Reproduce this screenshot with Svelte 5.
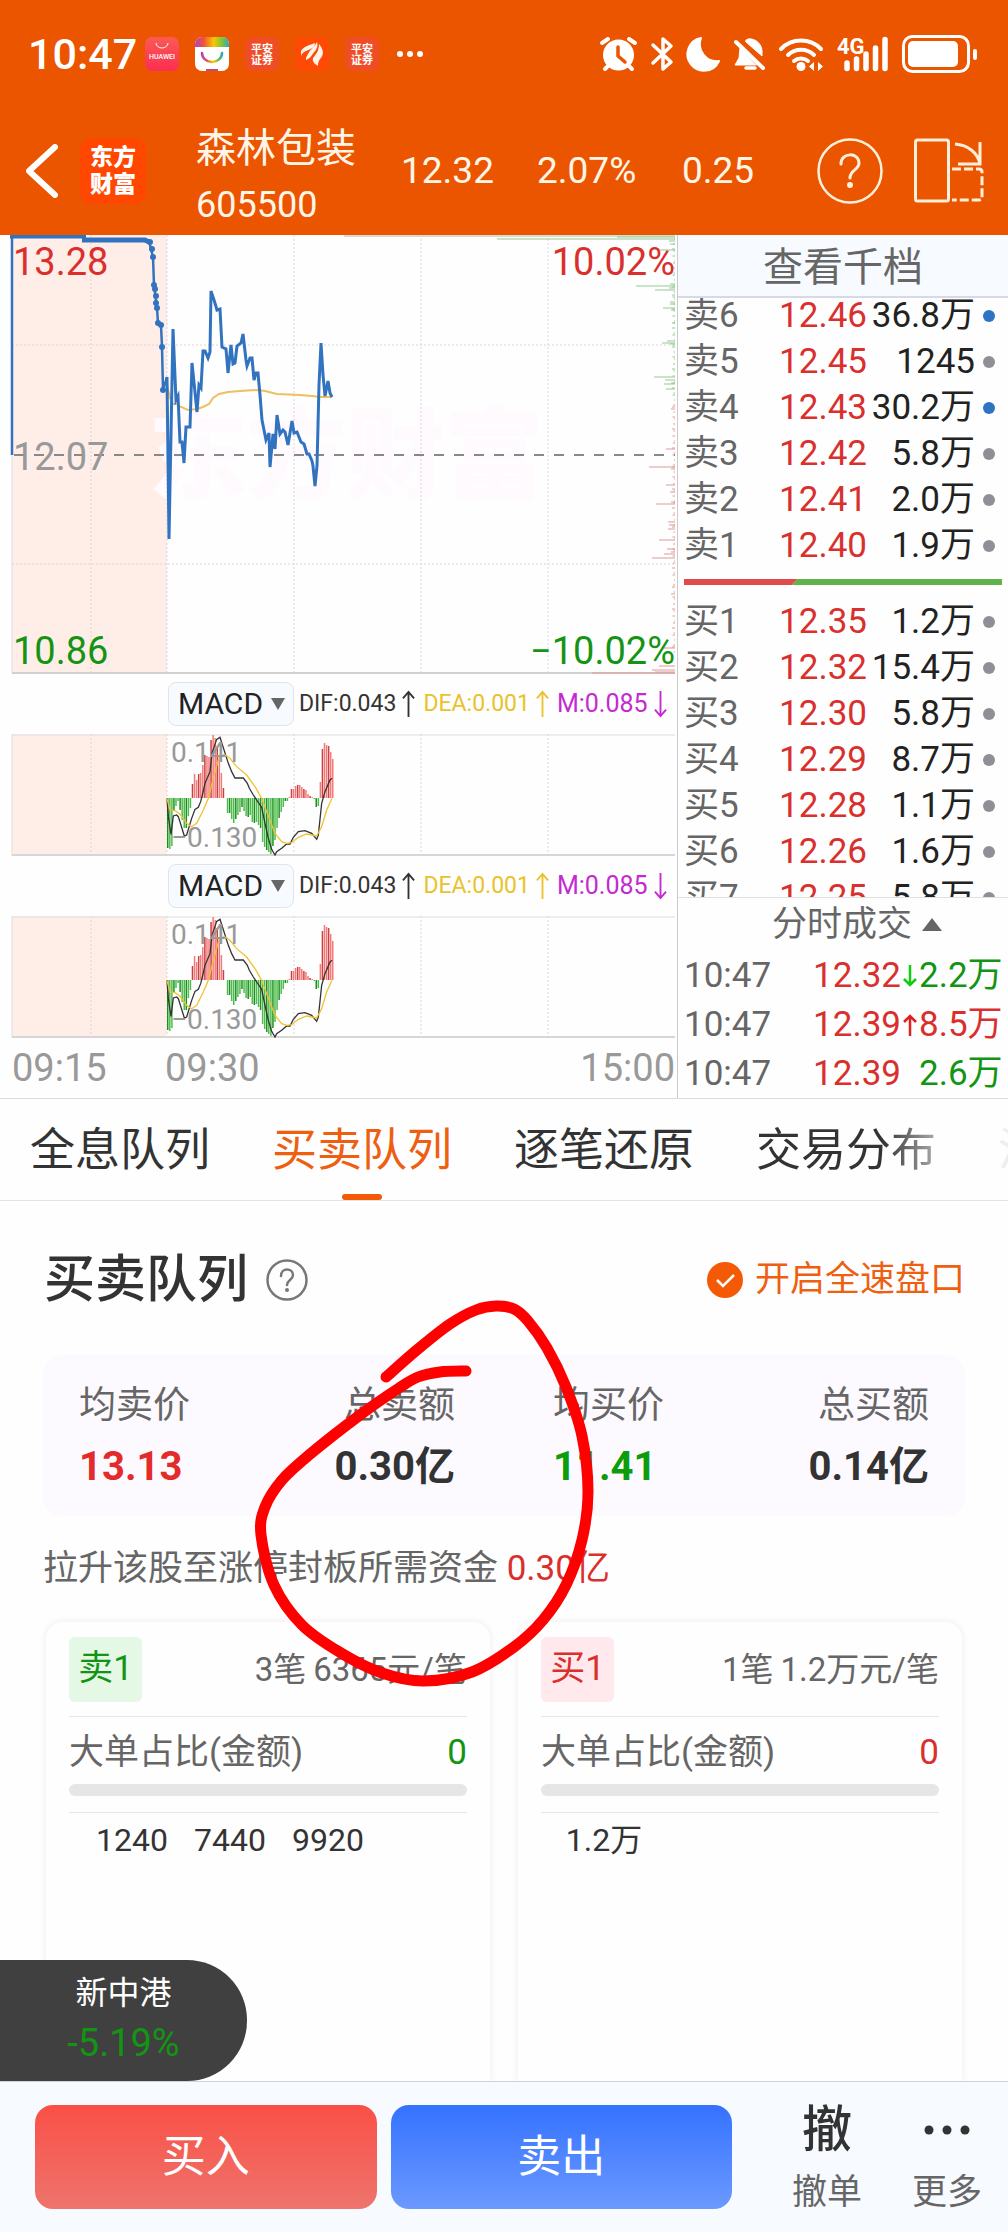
<script>
  const sells = [
    ['卖6', '12.46', '36.8万', true],
    ['卖5', '12.45', '1245', false],
    ['卖4', '12.43', '30.2万', true],
    ['卖3', '12.42', '5.8万', false],
    ['卖2', '12.41', '2.0万', false],
    ['卖1', '12.40', '1.9万', false]
  ];
  const buys = [
    ['买1', '12.35', '1.2万', false],
    ['买2', '12.32', '15.4万', false],
    ['买3', '12.30', '5.8万', false],
    ['买4', '12.29', '8.7万', false],
    ['买5', '12.28', '1.1万', false],
    ['买6', '12.26', '1.6万', false],
    ['买7', '12.25', '5.8万', false]
  ];
  const ticks = [
    { time: '10:47', price: '12.32', dir: 'down', amount: '2.2万', tone: 'green' },
    { time: '10:47', price: '12.39', dir: 'up', amount: '8.5万', tone: 'red' },
    { time: '10:47', price: '12.39', dir: '', amount: '2.6万', tone: 'green' }
  ];
  const tabs = ['全息队列', '买卖队列', '逐笔还原', '交易分布', '沪深港通'];
  let active = $state(1);

  const cards = [
    { tag: '卖1', tone: 'green', count: '3笔', avg: '6365元/笔', big: '0', items: ['1240', '7440', '9920'] },
    { tag: '买1', tone: 'red', count: '1笔', avg: '1.2万元/笔', big: '0', items: ['1.2万'] }
  ];

  const gridX = [91, 167, 294, 421, 548];

  const priceLine =
    '167,142 169,304 173,94 176,165 178,161 180,207 182,207 184,228 186,192 190,192 192,128 197,177 199,150 201,153 203,116 205,116 208,123 210,117 211,56 214,65 217,75 220,74 222,112 226,114 228,138 231,110 233,129 235,128 237,111 241,108 243,99 246,125 247,131 250,123 252,123 254,145 256,138 258,138 260,160 262,185 266,205 269,198 270,232 273,199 275,214 277,180 280,199 283,195 285,197 288,210 292,186 294,198 297,197 301,207 304,209 307,219 309,219 312,226 313,231 315,251 317,231 319,150 321,108 323,140 325,161 328,146 330,158 332,162';
  const avgLine =
    '167,150 170,163 173,169 177,169 181,172 188,175 197,174 203,172 209,169 213,163 219,159 228,157 240,156 258,155 265,156 277,159 300,160 312,161 320,162 332,162';
  const auctionDots = [[150, 7], [152, 14], [153, 22], [154, 50], [155, 54], [156, 61], [156, 68], [157, 73], [158, 88], [161, 90], [162, 112], [163, 155]];

  const depthGreen = [[4, 178], [2, 58], [6, 6], [9, 5], [15, 15], [49, 5], [51, 39], [53, 6], [55, 20], [60, 3], [67, 5], [69, 5], [73, 12], [75, 4], [88, 3], [106, 8], [108, 13], [109, 5], [142, 21], [145, 10], [148, 4], [149, 11], [154, 9]];
  const depthRed = [[174, 4], [214, 9], [232, 26], [234, 4], [250, 9], [257, 5], [267, 4], [269, 19], [287, 7], [290, 6], [294, 7], [305, 16], [314, 8], [317, 4], [319, 11], [323, 23], [359, 4], [413, 11], [431, 16], [435, 23], [437, 20], [438, 83]];
  const small = Array.from({ length: 104 }, (_, i) => [4 + i * 4 + (i % 3), 1 + ((i * 7) % 5) / 2]);

  const macd = [
    -50, -51, -48, -13, -8, -3, -12, -22, -30, -30, -18, -10, 14, 24, 18, 24, 25, 33, 43, 42, 41, 58, 63, 60, 52, 43, 25,
    10, 0, -15, -15, -21, -25, -21, -17, -14, -9, -13, -18, -19, -17, -24, -25, -24, -27, -30, -44, -49, -52, -54, -56,
    -48, -42, -30, -20, -14, -9, -3, -3, 1, 9, 9, 12, 13, 13, 11, 9, 8, 4, 2, 1, -1, -9, -8, 16, 49, 55, 53, 52, 46, 39
  ];
  const barX = (i) => 167 + (i * 165) / (macd.length - 1);
  const toPoints = (pts) => pts.map(([x, y]) => `${150 + x / 3},${y / 3 - 14}`).join(' ');
  const dif = toPoints([[51, 236], [55, 290], [63, 343], [70, 288], [80, 285], [85, 290], [103, 348], [110, 345], [125, 295], [135, 268], [145, 262], [152, 245], [157, 225], [165, 190], [180, 155], [186, 100], [200, 58], [210, 52], [235, 130], [245, 155], [255, 174], [280, 174], [292, 190], [298, 205], [310, 225], [320, 240], [335, 262], [345, 310], [355, 355], [365, 388], [375, 405], [380, 395], [395, 385], [410, 372], [420, 372], [430, 352], [445, 335], [465, 332], [485, 340], [500, 358], [505, 345], [515, 250], [525, 215], [540, 180], [546, 175]]);
  const dea = toPoints([[51, 236], [60, 270], [75, 272], [90, 282], [110, 310], [125, 320], [140, 310], [160, 270], [175, 235], [190, 175], [205, 120], [222, 103], [240, 115], [260, 140], [290, 165], [315, 200], [335, 235], [350, 275], [375, 340], [395, 365], [410, 370], [425, 368], [445, 352], [470, 342], [500, 348], [515, 320], [530, 270], [546, 235]]);

  // Smooth curve through the pen samples
  const pen = [[386, 1377], [418, 1349], [450, 1324], [476, 1310], [496, 1306], [514, 1309], [528, 1321], [547, 1348], [566, 1387], [582, 1436], [588, 1492], [582, 1540], [566, 1585], [543, 1620], [514, 1647], [472, 1672], [424, 1681], [382, 1673], [341, 1653], [302, 1625], [274, 1585], [261, 1535], [265, 1507], [282, 1480], [309, 1455], [360, 1415], [399, 1388], [418, 1377], [440, 1372], [466, 1371]];
  const penPath = pen.reduce((d, p, i) => {
    if (i === 0) return `M${p[0]} ${p[1]}`;
    const a = pen[Math.max(i - 2, 0)], b = pen[i - 1], c = pen[Math.min(i + 1, pen.length - 1)];
    return `${d} C${b[0] + (p[0] - a[0]) / 6} ${b[1] + (p[1] - a[1]) / 6} ${p[0] - (c[0] - b[0]) / 6} ${p[1] - (c[1] - b[1]) / 6} ${p[0]} ${p[1]}`;
  }, '');
</script>

{#snippet arrow(dir)}
  <svg class="arrow" viewBox="0 0 14 30" aria-hidden="true">
    <path d={dir === 'up' ? 'M7 29V2M1 9L7 2L13 9' : 'M7 1V28M1 21L7 28L13 21'} fill="none" stroke="currentColor" stroke-width="2" />
  </svg>
{/snippet}

{#snippet pingan()}
  <svg class="app" viewBox="0 0 34 34" role="img" aria-label="平安证券">
    <rect width="34" height="34" rx="7" fill="#ef4d25" />
    <text x="17" y="16" class="tiny">平安</text>
    <text x="17" y="27" class="tiny">证券</text>
  </svg>
{/snippet}

{#snippet book(rows, caption)}
  <table class="book" aria-label={caption}>
    <colgroup><col class="c-label" /><col class="c-price" /><col class="c-amount" /><col /></colgroup>
    <tbody>
      {#each rows as [label, price, amount, large]}
        <tr>
          <th scope="row">{label}</th>
          <td class="red">{price}</td>
          <td>{amount}</td>
          <td class="dot-cell"><span class="dot" class:large></span></td>
        </tr>
      {/each}
    </tbody>
  </table>
{/snippet}

{#snippet indicator(id)}
  <div class="ind-head">
    <label class="pick">
      <select aria-label="指标 {id}"><option>MACD</option></select>
      <svg viewBox="0 0 14 12" aria-hidden="true"><path d="M0 0H14L7 12Z" fill="#666" /></svg>
    </label>
    <span class="ind dif">DIF:0.043{@render arrow('up')}</span>
    <span class="ind dea">DEA:0.001{@render arrow('up')}</span>
    <span class="ind m">M:0.085{@render arrow('down')}</span>
  </div>
  <div class="stack">
    <svg class="plot" viewBox="0 0 677 122" aria-hidden="true">
      <rect x="12" y="0" width="155" height="121" fill="#ffeee8" />
      {#each gridX as x}<path d="M{x} 0V121" class="gv" />{/each}
      <path d="M12 0V122M12 1H675" fill="none" stroke="#dedede" />
      <path d="M12 121H675" stroke="#d6d6d6" stroke-width="2" />
      {#each macd as v, i}
        <rect x={barX(i)} y={v > 0 ? 64 - v : 64} width="1.5" height={Math.abs(v)} fill={v > 0 ? (i % 3 ? '#f47a7a' : '#cf3f3f') : i % 3 ? '#4fbb4f' : '#179417'} />
      {/each}
      <polyline points={dif} fill="none" stroke="#333" stroke-width="1.3" />
      <polyline points={dea} fill="none" stroke="#efc234" stroke-width="1.3" />
    </svg>
    <div class="ind-labels"><span>0.141</span><span>−0.130</span></div>
  </div>
{/snippet}

<div class="page">
  <header>
    <div class="status">
      <span class="clock">10:47</span>
      <div class="apps">
        <svg class="app" viewBox="0 0 34 34" role="img" aria-label="HUAWEI">
          <defs><linearGradient id="hw" x2="0" y2="1"><stop stop-color="#fb5a55" /><stop offset="1" stop-color="#fb2e50" /></linearGradient></defs>
          <rect width="34" height="34" rx="7" fill="url(#hw)" />
          <path d="M11 6A6 5 0 0 0 23 6" fill="none" stroke="#fff" stroke-width="1" />
          <text x="17" y="22" class="hw">HUAWEI</text>
        </svg>
        <svg class="app" viewBox="0 0 34 34" aria-hidden="true">
          <defs>
            <linearGradient id="rb"><stop stop-color="#b044c0" /><stop offset=".25" stop-color="#f0503c" /><stop offset=".55" stop-color="#f8c800" /><stop offset=".8" stop-color="#7ac43a" /><stop offset="1" stop-color="#2aa8c8" /></linearGradient>
            <clipPath id="rc"><rect width="34" height="34" rx="7" /></clipPath>
          </defs>
          <g clip-path="url(#rc)">
            <rect width="34" height="34" fill="#fff" />
            <rect width="34" height="10" fill="url(#rb)" />
            <path d="M7 16A10 9 0 0 0 27 16" fill="none" stroke="url(#rb)" stroke-width="2.6" stroke-linecap="round" />
            <path d="M11 33H23" stroke="#c04a70" stroke-width="2" />
          </g>
        </svg>
        {@render pingan()}
        <svg class="app" viewBox="0 0 34 34" aria-hidden="true">
          <rect width="34" height="34" rx="7" fill="#ff4a05" />
          <path d="M6 14C9 9 15 8 20 6C20 11 14 13 11 14C9 15 7 16 6 19ZM12 19C15 12 19 11 22 5C24 11 19 15 17 18C15 21 13 22 11 23C11 21 11 20 12 19ZM18 21C22 16 24 13 24 7C30 14 28 19 25 22C23 25 23 27 23 29C20 27 17 25 18 21Z" fill="#fff4ea" />
        </svg>
        {@render pingan()}
      </div>
      <svg class="more" viewBox="0 0 28 8" aria-hidden="true"><circle cx="4" cy="4" r="3" /><circle cx="14" cy="4" r="3" /><circle cx="24" cy="4" r="3" /></svg>
      <svg class="sys" viewBox="596 30 384 46" role="img" aria-label="闹钟 蓝牙 免打扰 静音 WLAN 4G 电量">
        <g fill="none" stroke="#fff" stroke-linecap="round" stroke-linejoin="round">
          <circle cx="618.500" cy="54" r="15.500" fill="#fff" stroke="none" />
          <path d="M602 42L608 38M635 42L629 38" stroke-width="4" />
          <path d="M608 65L605 68M629 65L632 68" stroke-width="4" />
          <path d="M618 46V55L625 61" stroke="#ec5500" stroke-width="3.500" />
          <path d="M653 44L671 61L663 68V38L671 45L653 62" stroke-width="3.500" />
          <path d="M701 37A16.500 16.500 0 1 0 719 60A17 17 0 0 1 701 37Z" fill="#fff" stroke="#fff" stroke-width="2" />
          <path d="M746 39C751 35 762 41 762 50V55L746 41ZM740 47L739 57L735 64H756Z" fill="#fff" stroke-width="1" />
          <path d="M736 41L763 67" stroke-width="4" />
          <path d="M746 67H755" stroke-width="3.500" />
          <path d="M781 48A28 28 0 0 1 821 48M788 54A19 19 0 0 1 814 54M794 60A11 11 0 0 1 808 60" stroke-width="4" />
          <circle cx="801" cy="65.500" r="4.500" fill="#fff" stroke="none" />
          <path d="M814 61V70L809 65.500ZM818 61V70L823 65.500Z" fill="#fff" stroke="none" />
          <path d="M847 62V67.500M856.500 58V67.500M866 53V67.500M875.500 47V67.500M885 38.500V67.500" stroke-width="5.500" />
          <rect x="903.500" y="35.500" width="65" height="35" rx="9" stroke-width="3" />
          <rect x="908" y="40" width="50" height="26" rx="5" fill="#fff" stroke="none" />
          <path d="M975 50V57" stroke-width="4" />
        </g>
        <text x="837" y="53" class="net">4G</text>
      </svg>
    </div>
    <div class="bar">
      <button class="plain" aria-label="返回">
        <svg class="back" viewBox="0 0 32 54"><path d="M29 3L3 27L29 51" fill="none" stroke="#fff" stroke-width="6" stroke-linejoin="round" stroke-linecap="round" /></svg>
      </button>
      <span class="logo">东方<br />财富</span>
      <h1>森林包装<small>605500</small></h1>
      <span>12.32</span>
      <span>2.07%</span>
      <span>0.25</span>
      <button class="plain help-col" aria-label="帮助">
        <svg class="help-big" viewBox="0 0 66 66"><g fill="none" stroke="#fff0dc" stroke-width="2.500" stroke-linecap="round"><circle cx="33" cy="33" r="31.500" /><path d="M24 26C24 14 42 14 42 25C42 32 33 32 33 40" stroke-width="3" /></g><circle cx="33" cy="47" r="3" fill="#fff0dc" /></svg>
      </button>
      <button class="plain rotate-col" aria-label="横屏">
        <svg class="rotate" viewBox="0 0 70 66"><g fill="none" stroke="#fff0dc" stroke-width="3"><rect x="1.500" y="2" width="33" height="61" rx="2" /><path d="M41 6C54 7 64 15 66 26M66 4V26H44" /><path d="M38 31H65Q68 31 68 34V60Q68 62 65 62H38" stroke-dasharray="9 3" /></g></svg>
      </button>
    </div>
  </header>

  <section class="market">
    <div class="charts">
      <div class="stack">
        <svg class="plot" viewBox="0 0 677 439" role="img" aria-label="分时走势">
          <rect x="12" y="0" width="155" height="438" fill="#ffeee8" />
          <text x="346" y="256" class="mark">东方财富</text>
          {#each gridX as x}<path d="M{x} 0V438" class="gv" />{/each}
          <path d="M12 110H675M12 329H675" class="gv" />
          <path d="M12 0V438" stroke="#dcdce4" />
          <path d="M12 438H675" stroke="#d0d0d0" stroke-width="2" />
          <path d="M344 1H675" stroke="#d3dfc8" stroke-width="2" />
          {#each small as [y, w]}<path d="M{675 - w} {y}H675" stroke={y < 166 ? '#8cc88c' : '#dd9a9a'} />{/each}
          {#each depthGreen as [y, w]}<path d="M{675 - w} {y}H675" stroke="#93c993" />{/each}
          {#each depthRed as [y, w]}<path d="M{675 - w} {y}H675" stroke="#e09a9a" />{/each}
          <path d="M14 220H675" stroke="#888" stroke-width="2" stroke-dasharray="10 10" />
          <polyline points={avgLine} fill="none" stroke="#edc060" stroke-width="2" />
          <path d="M12 220V2" stroke="#3173bf" stroke-width="2.500" />
          <path d="M10 1H86M82 5H145L149 7" fill="none" stroke="#3173bf" stroke-width="5" />
          <polyline points="149,6 153,22 154,50 157,73 158,88 161,90 162,112 163,155 167,142" fill="none" stroke="#3173bf" stroke-width="2.500" />
          {#each auctionDots as [cx, cy]}<circle {cx} {cy} r="3" fill="#3173bf" />{/each}
          <polyline points={priceLine} fill="none" stroke="#3173bf" stroke-width="3" />
        </svg>
        <div class="axis">
          <div><span class="red">13.28</span><span class="red">10.02%</span></div>
          <div><span class="muted">12.07</span></div>
          <div><span class="green">10.86</span><span class="green">−10.02%</span></div>
        </div>
      </div>
      {@render indicator(1)}
      {@render indicator(2)}
      <div class="times"><span>09:15</span><span>09:30</span><span>15:00</span></div>
    </div>

    <aside>
      <button class="plain depth">查看千档</button>
      <div class="orders">
        {@render book(sells, '卖盘')}
        <svg class="ratio" viewBox="0 0 319 6" preserveAspectRatio="none" aria-hidden="true"><path d="M0 0H114L108 6H0Z" fill="#e04b4b" /><path d="M114 0H319V6H108Z" fill="#60b34a" /></svg>
        {@render book(buys, '买盘')}
      </div>
      <button class="plain deals">分时成交<svg viewBox="0 0 20 13" aria-hidden="true"><path d="M0 13L10 0L20 13Z" fill="#666" /></svg></button>
      <table class="ticks" aria-label="分时成交">
        <colgroup><col class="t-time" /><col class="t-price" /><col class="t-arrow" /><col /></colgroup>
        <tbody>
          {#each ticks as t}
            <tr>
              <th scope="row">{t.time}</th>
              <td class="red">{t.price}</td>
              <td class="tick-arrow" class:down={t.dir === 'down'}>
                {#if t.dir}
                  <svg viewBox="0 0 14 22" aria-hidden="true"><path d={t.dir === 'up' ? 'M7 22V2M1 8L7 2L13 8' : 'M7 0V20M1 14L7 20L13 14'} fill="none" stroke="currentColor" stroke-width="2.500" /></svg>
                {/if}
              </td>
              <td class={t.tone}>{t.amount}</td>
            </tr>
          {/each}
        </tbody>
      </table>
    </aside>
  </section>

  <nav>
    {#each tabs as tab, i}
      <button class="plain tab" class:on={active === i} onclick={() => (active = i)}>{tab}</button>
    {/each}
  </nav>

  <main>
    <div class="heading">
      <h2>买卖队列</h2>
      <button class="plain help" aria-label="说明">
        <svg viewBox="0 0 42 42"><g fill="none" stroke="#777" stroke-width="2.500" stroke-linecap="round"><circle cx="21" cy="21" r="19.500" /><path d="M15 17C15 8 27 9 27 16C27 21 21 21 21 26" /></g><circle cx="21" cy="31" r="2" fill="#777" /></svg>
      </button>
      <label class="fast">
        <span class="check">
          <input type="checkbox" checked />
          <svg viewBox="0 0 36 36" aria-hidden="true"><path d="M10 18L16 24L27 13" fill="none" stroke="#fff" stroke-width="2.500" /></svg>
        </span>
        开启全速盘口
      </label>
    </div>

    <div class="summary">
      <dl><div><dt>均卖价</dt><dd class="red">13.13</dd></div><div><dt>总卖额</dt><dd>0.30亿</dd></div></dl>
      <dl><div><dt>均买价</dt><dd class="green">11.41</dd></div><div><dt>总买额</dt><dd>0.14亿</dd></div></dl>
    </div>

    <p class="need">拉升该股至涨停封板所需资金 <span class="red">0.30亿</span></p>

    <div class="cards">
      {#each cards as c}
        <article>
          <div class="top">
            <span class="tag {c.tone}">{c.tag}</span>
            <span class="avg"><span>{c.count}</span><span>{c.avg}</span></span>
          </div>
          <div class="big">
            <span>大单占比(金额)</span><span class={c.tone}>{c.big}</span>
          </div>
          <div class="track"></div>
          <ul>
            {#each c.items as item}<li>{item}</li>{/each}
          </ul>
        </article>
      {/each}
    </div>

    <svg class="pen" viewBox="0 1201 1008 500" aria-hidden="true"><path d={penPath} fill="none" stroke="#fe0000" stroke-width="11" stroke-linecap="round" stroke-linejoin="round" /></svg>
  </main>

  <footer>
    <a class="float" href="#stock"><span>新中港</span><span class="pct">-5.19%</span></a>
    <button class="trade buy">买入</button>
    <button class="trade sell">卖出</button>
    <button class="plain act"><span class="glyph">撤</span><span>撤单</span></button>
    <button class="plain act">
      <span class="glyph"><svg viewBox="0 0 46 10" aria-hidden="true"><g fill="#333"><circle cx="5" cy="5" r="4.500" /><circle cx="23" cy="5" r="4.500" /><circle cx="41" cy="5" r="4.500" /></g></svg></span>
      <span>更多</span>
    </button>
  </footer>
</div>

<style>
  :global(body) { background: #fefefe; }
  .page, .page * { box-sizing: border-box; }
  .page {
    font-family: Roboto, 'Noto Sans CJK SC', sans-serif;
    min-height: 100vh;
    display: flex;
    flex-direction: column;
    color: #333;
    background: #fefefe;
    overflow: hidden;
  }
  .plain { font: inherit; color: inherit; background: none; border: 0; padding: 0; margin: 0; }
  svg { display: block; }
  .red { color: #d9302e; }
  .green { color: #149414; }
  .muted { color: #999; }

  header { background: #ec5500; height: 235px; color: #fff6e8; }
  .status { height: 107px; display: flex; align-items: center; padding: 0 28px; }
  .clock { font-size: 43px; font-weight: 500; line-height: 50px; color: #fff; width: 117px; }
  .apps { display: flex; gap: 16px; margin-right: 17px; }
  .app { width: 34px; height: 34px; }
  .tiny { font-size: 11px; font-weight: 700; fill: #fff; text-anchor: middle; }
  .hw { font-size: 7px; font-weight: 500; fill: #fff; text-anchor: middle; }
  .net { font-size: 22px; font-weight: 700; fill: #fff; }
  .more { width: 28px; height: 8px; fill: #fff; }
  .sys { width: 384px; height: 46px; margin-left: auto; }
  .bar {
    height: 128px;
    display: grid;
    grid-template-columns: 54px 116px 205px 136px 145px 1fr 97px 94px;
    align-items: center;
    padding-left: 26px;
    font-size: 37px;
    line-height: 44px;
  }
  .back { width: 32px; height: 54px; }
  .logo {
    width: 66px;
    height: 66px;
    border-radius: 12px;
    background: #ff4700;
    color: #fff;
    font-size: 23px;
    line-height: 27px;
    font-weight: 900;
    padding-top: 6px;
    text-align: center;
  }
  h1 { margin: 0; padding-top: 12px; font-size: 40px; line-height: 56px; font-weight: 400; }
  small { display: block; font-size: 36px; line-height: 56px; }
  .help-col { grid-column: 7; }
  .help-big { width: 66px; height: 66px; }
  .rotate { width: 70px; height: 66px; }

  .market { display: grid; grid-template-columns: minmax(0, 1fr) 331px; border-bottom: 1px solid #ddd; }
  .stack { display: grid; }
  .stack > * { grid-area: 1 / 1; min-width: 0; }
  .plot { width: 100%; height: auto; }
  .gv { stroke: #d9d5dc; stroke-dasharray: 2 2; fill: none; }
  .mark { font-size: 99px; font-weight: 900; fill: #fefafe; text-anchor: middle; font-family: 'Noto Sans CJK SC', sans-serif; }
  .axis { display: flex; flex-direction: column; justify-content: space-between; font-size: 38px; line-height: 44px; padding: 5px 2px 1px 13px; }
  .axis div { display: flex; justify-content: space-between; }
  .ind-head { display: flex; align-items: center; height: 60px; padding-left: 168px; }
  .pick { display: grid; align-items: center; width: 126px; height: 44px; margin-right: 5px; }
  .pick > * { grid-area: 1 / 1; }
  .pick select {
    appearance: none;
    width: 126px;
    height: 44px;
    border: 1px solid #dfe3ee;
    border-radius: 8px;
    background: #f7faff;
    color: #222;
    font: 30px/40px Roboto, 'Noto Sans CJK SC', sans-serif;
    padding: 0 0 0 9px;
  }
  .pick svg { width: 14px; height: 12px; justify-self: end; margin-right: 9px; }
  .ind { display: flex; align-items: center; gap: 6px; margin-right: 8px; white-space: nowrap; font-size: 23px; line-height: 36px; }
  .dea { color: #e9c22c; }
  .m { color: #c32bd0; font-size: 25px; margin-right: 0; }
  .arrow { width: 13px; height: 30px; }
  .ind-labels { display: flex; flex-direction: column; justify-content: space-between; padding: 3px 0 2px 171px; font-size: 28px; line-height: 32px; color: #999; }
  .times { display: grid; grid-template-columns: 153px 1fr auto; padding: 7px 2px 7px 12px; font-size: 38px; line-height: 46px; color: #999; }

  aside { border-left: 1px solid #cacaca; min-width: 0; }
  .depth { display: block; width: 100%; height: 63px; background: #f7faff; border-bottom: 2px solid #d6d9e6; color: #666; font-size: 40px; line-height: 56px; padding-top: 4px; }
  .orders { height: 599px; overflow: hidden; padding-left: 6px; }
  .book { margin-top: -5px; }
  .ratio + .book { margin-top: 0; }
  .ratio { width: calc(100% - 6px); height: 6px; margin: 10px 6px 14px 0; }
  table { width: 100%; table-layout: fixed; border-collapse: collapse; font-size: 35px; }
  th, td { padding: 0; font-weight: 400; text-align: right; white-space: nowrap; }
  th { text-align: left; color: #666; }
  .book th, .book td { height: 46px; line-height: 46px; }
  .book td { color: #222; }
  .book td.red { color: #d9302e; }
  .c-label { width: 78px; }
  .c-price { width: 105px; }
  .c-amount { width: 108px; }
  .dot { display: block; width: 12px; height: 12px; border-radius: 50%; background: #8f8f98; margin-left: 8px; }
  .dot.large { background: #2f73c4; }
  .deals { display: flex; align-items: center; justify-content: center; gap: 10px; width: 100%; height: 54px; border-top: 1px solid #e0e0e0; color: #666; font-size: 35px; line-height: 50px; padding-left: 28px; }
  .deals svg { width: 20px; height: 13px; }
  .ticks { margin-left: 6px; width: calc(100% - 13px); }
  .ticks th, .ticks td { height: 49px; line-height: 49px; }
  .t-time { width: 100px; }
  .t-price { width: 117px; }
  .t-arrow { width: 18px; }
  .tick-arrow { color: #e02020; }
  .tick-arrow.down { color: #11cc11; }
  .tick-arrow svg { width: 14px; height: 22px; margin: 0 auto; }

  nav {
    display: flex;
    gap: 62px;
    padding-left: 30px;
    height: 102px;
    border-bottom: 1px solid #e2e2e2;
    overflow: hidden;
  }
  .tab { flex: none; display: flex; flex-direction: column; align-items: center; padding-top: 3px; font-size: 45px; line-height: 98px; }
  .tab::after { content: ''; width: 40px; height: 6px; margin-top: -6px; border-radius: 3px; }
  .tab.on { color: #ee5f11; }
  .tab.on::after { background: #f45a05; }
  .tab:nth-child(4) { background: linear-gradient(90deg, #333 70%, #aaa); background-clip: text; color: transparent; }
  .tab:nth-child(5) { color: #eee; }

  main { position: relative; flex: 1; display: flex; flex-direction: column; padding: 43px 43px 0; min-height: 0; }
  .heading { display: flex; align-items: center; height: 72px; }
  h2 { margin: 0 18px 0 1px; font-size: 51px; line-height: 72px; font-weight: 500; }
  .help svg { width: 42px; height: 42px; }
  .fast { margin-left: auto; display: flex; align-items: center; gap: 12px; font-size: 35px; line-height: 50px; color: #ee5f11; }
  .check { display: grid; }
  .check > * { grid-area: 1 / 1; }
  .check input { appearance: none; width: 36px; height: 36px; margin: 0; border-radius: 50%; background: #f45a05; }
  .check svg { width: 36px; height: 36px; pointer-events: none; }
  .summary { display: grid; grid-template-columns: 1fr 1fr; gap: 98px; margin-top: 39px; padding: 21px 36px 20px; height: 161px; border-radius: 18px; background: #fdfaff; }
  dl { margin: 0; display: flex; justify-content: space-between; }
  dl div:last-child { text-align: right; }
  dt { font-size: 37px; line-height: 60px; color: #666; }
  dd { margin: 0; font-size: 40px; line-height: 62px; font-weight: 700; }
  dd.red { color: #e32b2b; }
  dd.green { color: #0c9c0c; }
  .need { margin: 27px 0 0; font-size: 35px; line-height: 52px; color: #666; }
  .cards { flex: 1; display: grid; grid-template-columns: 1fr 1fr; gap: 28px; margin: 27px 3px 0; }
  article { padding: 15px 23px 0; border-radius: 16px 16px 0 0; box-shadow: 0 0 5px 2px #f6f2f6; background: #fefefe; min-width: 0; }
  .top { display: flex; justify-content: space-between; align-items: center; padding-bottom: 14px; border-bottom: 1px solid #e6e6e6; }
  .tag { width: 73px; height: 65px; border-radius: 6px; font-size: 35px; line-height: 64px; text-align: center; white-space: nowrap; }
  .tag.green { background: #e5f7e5; }
  .tag.red { background: #ffe9ec; }
  .avg { display: flex; gap: 7px; font-size: 33px; line-height: 50px; color: #666; white-space: nowrap; }
  .big { display: flex; justify-content: space-between; font-size: 35px; line-height: 52px; padding: 10px 0 5px; color: #666; }
  .big .green { color: #149414; }
  .big .red { color: #d9302e; }
  .track { height: 12px; border-radius: 6px; background: #e6e6e6; }
  ul { list-style: none; display: flex; margin: 16px 0 0; padding: 3px 0 0 14px; border-top: 1px solid #e6e6e6; }
  li { width: 98px; text-align: center; font-size: 32px; line-height: 48px; }
  .pen { position: absolute; left: 0; top: 0; width: 100%; height: auto; pointer-events: none; }

  footer {
    position: relative;
    display: flex;
    align-items: flex-start;
    height: 151px;
    padding: 23px 1px 0 35px;
    background: #f7faff;
    border-top: 1px solid #cfd2dc;
  }
  .trade { flex: 1; height: 104px; border: 0; border-radius: 18px; color: #fff; font-family: inherit; font-size: 44px; line-height: 60px; padding: 0; }
  .buy { background: linear-gradient(#fa5046, #ee746d); margin-right: 14px; }
  .sell { background: linear-gradient(#3472ff, #6c99ff); margin-right: 35px; }
  .act { width: 120px; display: flex; flex-direction: column; align-items: center; font-size: 35px; line-height: 50px; color: #666; }
  .glyph { display: flex; align-items: center; height: 62px; margin-top: -6px; margin-bottom: 7px; font-size: 50px; font-weight: 500; color: #333; }
  .glyph svg { width: 46px; height: 10px; }
  .float {
    position: absolute;
    left: 0;
    bottom: calc(100% + 1px);
    width: 247px;
    height: 121px;
    padding: 8px 0 0;
    border-radius: 0 60px 60px 0;
    background: #404040;
    color: #fff;
    text-decoration: none;
    text-align: center;
    font-size: 32px;
    line-height: 50px;
    display: flex;
    flex-direction: column;
  }
  .pct { font-size: 38px; color: #149414; }
</style>
